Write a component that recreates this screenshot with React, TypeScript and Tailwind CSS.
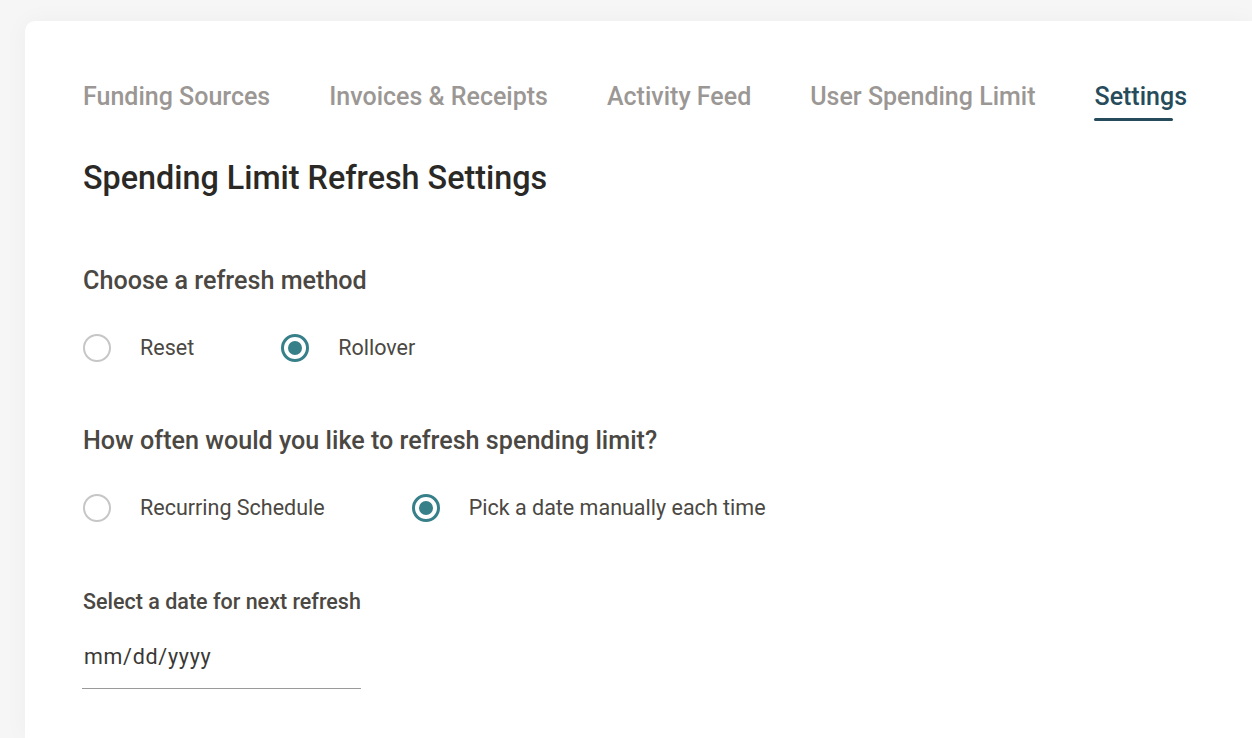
import React, { useState } from "react";

const tabs = [
  "Funding Sources",
  "Invoices & Receipts",
  "Activity Feed",
  "User Spending Limit",
  "Settings",
];

interface RadioProps {
  label: string;
  checked: boolean;
  onSelect: () => void;
}

const Radio: React.FC<RadioProps> = ({ label, checked, onSelect }) => (
  <button
    type="button"
    onClick={onSelect}
    className="flex items-center gap-[29px] h-[28px]"
  >
    {checked ? (
      <span className="w-[28px] h-[28px] rounded-full border-[3px] border-[#37808a] flex items-center justify-center">
        <span className="w-[14px] h-[14px] rounded-full bg-[#37808a]" />
      </span>
    ) : (
      <span className="w-[28px] h-[28px] rounded-full border-2 border-[#c6c6c6]" />
    )}
    <span className="text-[21.5px] leading-[24px] text-[#4b4843]">{label}</span>
  </button>
);

export default function App() {
  const [method, setMethod] = useState("rollover");
  const [often, setOften] = useState("manual");

  return (
    <div
      className="min-h-screen bg-[#f6f6f6] pt-[21px] pl-[25px] overflow-hidden"
      style={{ fontFamily: "Roboto, 'Liberation Sans', sans-serif" }}
    >
      {/* Card */}
      <div className="bg-white rounded-tl-[10px] min-h-[717px] pl-[58px] pt-[63px] shadow-[0_0_24px_rgba(0,0,0,0.04)]">
        {/* Tabs */}
        <div className="flex gap-[59px]">
          {tabs.map((t) => {
            const active = t === "Settings";
            return (
              <div key={t} className="flex flex-col">
                <span
                  className={`text-[25px] leading-[26px] font-medium whitespace-nowrap ${
                    active ? "text-[#264b5b]" : "text-[#9b9794]"
                  }`}
                >
                  {t}
                </span>
                <span
                  className={`mt-[8px] h-[3px] w-[79px] -ml-px rounded-full ${
                    active ? "bg-[#264b5b]" : "bg-transparent"
                  }`}
                />
              </div>
            );
          })}
        </div>

        <h1 className="mt-[40px] text-[32.3px] leading-[34px] font-medium text-[#2b2926]">
          Spending Limit Refresh Settings
        </h1>

        <h2 className="mt-[73px] text-[25.15px] leading-[26px] font-medium text-[#4b4843]">
          Choose a refresh method
        </h2>
        <div className="mt-[40px] flex gap-[87px]">
          <Radio label="Reset" checked={method === "reset"} onSelect={() => setMethod("reset")} />
          <Radio label="Rollover" checked={method === "rollover"} onSelect={() => setMethod("rollover")} />
        </div>

        <h2 className="mt-[66px] text-[25.15px] leading-[26px] font-medium text-[#4b4843]">
          How often would you like to refresh spending limit?
        </h2>
        <div className="mt-[40px] flex gap-[87px]">
          <Radio
            label="Recurring Schedule"
            checked={often === "recurring"}
            onSelect={() => setOften("recurring")}
          />
          <Radio
            label="Pick a date manually each time"
            checked={often === "manual"}
            onSelect={() => setOften("manual")}
          />
        </div>

        <label className="block mt-[68px] text-[21.5px] leading-[24px] font-medium text-[#4b4843]">
          Select a date for next refresh
        </label>
        <div className="mt-[31px] w-[279px] -ml-px pl-[2px] pb-[17px] border-b border-[#9a9a9a]">
          <span className="text-[21.5px] leading-[24px] tracking-[0.7px] text-[#3a3834]">mm/dd/yyyy</span>
        </div>
      </div>
    </div>
  );
}
